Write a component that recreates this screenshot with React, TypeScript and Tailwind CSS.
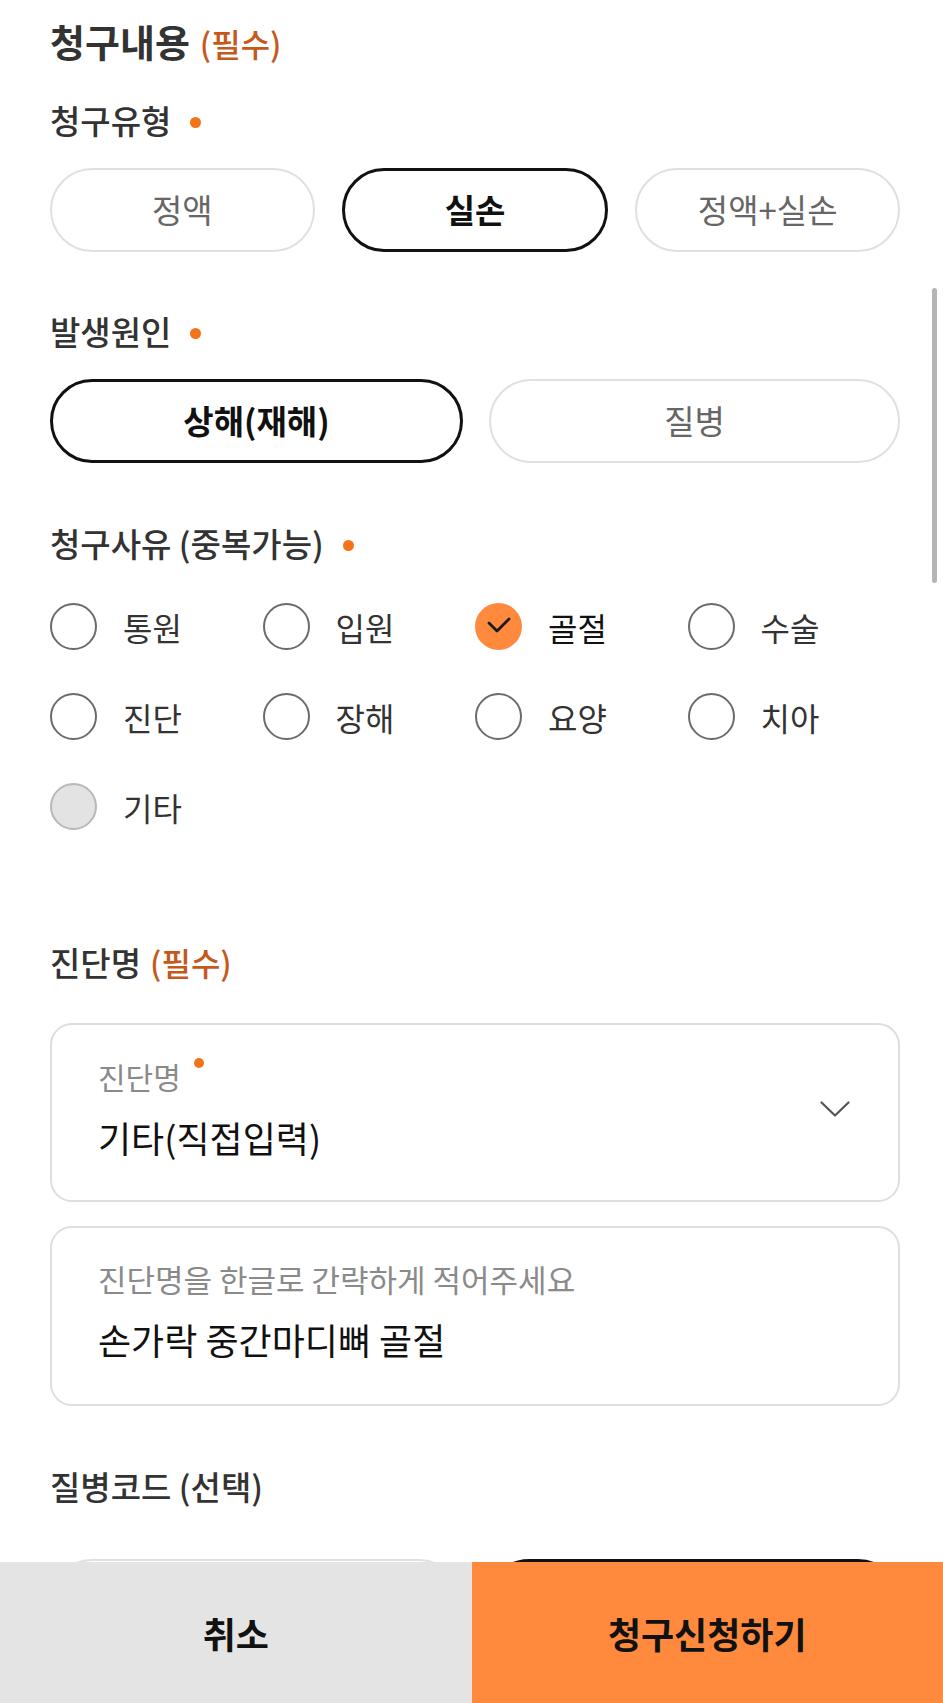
import { useState } from "react";

const reasons = ["통원", "입원", "골절", "수술", "진단", "장해", "요양", "치아", "기타"];

function SectionLabel({ text, dot }: { text: string; dot?: boolean }) {
  return (
    <div className="flex h-[36px] items-center text-[33px] font-medium leading-[36px] text-[#333]">
      <span>{text}</span>
      {dot && <span className="ml-[19px] mt-[4px] h-[11px] w-[11px] rounded-full bg-[#f37318]" />}
    </div>
  );
}

function Pill({ label, active, onClick }: { label?: string; active: boolean; onClick: () => void }) {
  return (
    <button
      onClick={onClick}
      className={`h-[84px] flex-1 rounded-full text-[33px] ${
        active ? "border-[3px] border-[#111] font-bold text-[#111]" : "border-2 border-[#e0e0e0] text-[#666]"
      }`}
    >
      {label}
    </button>
  );
}

export default function App() {
  const [claimType, setClaimType] = useState("실손");
  const [cause, setCause] = useState("상해(재해)");
  const [checked, setChecked] = useState<string[]>(["골절"]);
  const [code, setCode] = useState("right");

  const toggle = (r: string) => {
    if (r === "기타") return;
    setChecked((c) => (c.includes(r) ? c.filter((x) => x !== r) : [...c, r]));
  };

  return (
    <div className="relative min-h-[1900px] bg-white font-['Noto_Sans_CJK_KR','Noto_Sans',sans-serif]">
      <div className="pl-[50px] pr-[43px] pt-[21px]">
        {/* 청구내용 */}
        <div className="flex h-[40px] items-baseline leading-[40px]">
          <span className="text-[38px] font-semibold text-[#333]">청구내용</span>
          <span className="ml-[10px] text-[32px] font-medium text-[#c5591c]">(필수)</span>
        </div>

        <div className="mt-[41px]">
          <SectionLabel text="청구유형" dot />
        </div>
        <div className="mt-[30px] flex gap-[27px]">
          {["정액", "실손", "정액+실손"].map((t) => (
            <Pill key={t} label={t} active={claimType === t} onClick={() => setClaimType(t)} />
          ))}
        </div>

        <div className="mt-[61px]">
          <SectionLabel text="발생원인" dot />
        </div>
        <div className="mt-[30px] flex gap-[26px]">
          {["상해(재해)", "질병"].map((t) => (
            <Pill key={t} label={t} active={cause === t} onClick={() => setCause(t)} />
          ))}
        </div>

        <div className="mt-[62px]">
          <SectionLabel text="청구사유 (중복가능)" dot />
        </div>
        <div className="mt-[42px] grid grid-cols-4 gap-y-[43px]">
          {reasons.map((r) => {
            const on = checked.includes(r);
            const disabled = r === "기타";
            return (
              <button key={r} onClick={() => toggle(r)} className="flex h-[47px] items-center gap-[26px]">
                {on ? (
                  <span className="flex h-[47px] w-[47px] items-center justify-center rounded-full bg-[#ff8a3d]">
                    <svg width="47" height="47" viewBox="0 0 47 47" fill="none">
                      <path d="M14 20l8 8 12-12" stroke="#1a1a1a" strokeWidth="2.8" strokeLinecap="round" strokeLinejoin="round" />
                    </svg>
                  </span>
                ) : disabled ? (
                  <span className="h-[47px] w-[47px] rounded-full border-2 border-[#b8b8b8] bg-[#e3e3e3]" />
                ) : (
                  <span className="h-[47px] w-[47px] rounded-full border-2 border-[#6b6b6b]" />
                )}
                <span className={`text-[32px] leading-[40px] ${on ? "text-[#111]" : "text-[#333]"}`}>{r}</span>
              </button>
            );
          })}
        </div>

        {/* 진단명 */}
        <div className="mt-[114px] flex h-[36px] items-baseline leading-[36px]">
          <span className="text-[33px] font-medium text-[#333]">진단명</span>
          <span className="ml-[9px] text-[32px] font-medium text-[#c5591c]">(필수)</span>
        </div>

        <div className="mt-[43px] flex items-center rounded-[22px] border-2 border-[#dedede] pb-[43px] pl-[46px] pr-[48px] pt-[35px]">
          <div className="flex-1">
            <div className="flex h-[32px] items-start text-[30px] leading-[32px] text-[#8a8a8a]">
              <span>진단명</span>
              <span className="ml-[13px] mt-[-2px] h-[10px] w-[10px] rounded-full bg-[#f37318]" />
            </div>
            <div className="mt-[25px] h-[40px] text-[36px] leading-[40px] text-[#111]">기타(직접입력)</div>
          </div>
          <svg width="30" height="16" viewBox="0 0 30 16" fill="none">
            <path d="M1.5 1.5L15 14.5L28.5 1.5" stroke="#555" strokeWidth="2.2" strokeLinecap="round" strokeLinejoin="round" />
          </svg>
        </div>

        <div className="mt-[24px] rounded-[22px] border-2 border-[#dedede] pb-[45px] pl-[46px] pr-[48px] pt-[35px]">
          <div className="h-[32px] text-[31px] leading-[32px] text-[#8a8a8a]">진단명을 한글로 간략하게 적어주세요</div>
          <div className="mt-[24px] h-[40px] text-[36px] leading-[40px] text-[#111]">손가락 중간마디뼈 골절</div>
        </div>

        <div className="mt-[62px]">
          <SectionLabel text="질병코드 (선택)" />
        </div>
        {/* row hidden behind the action bar */}
        <div className="mt-[55px] flex gap-[26px]">
          <Pill active={code === "left"} onClick={() => setCode("left")} />
          <Pill active={code === "right"} onClick={() => setCode("right")} />
        </div>
      </div>

      {/* overlay scrollbar */}
      <div className="fixed right-[6px] top-[288px] h-[295px] w-[5px] rounded-full bg-[#b5b5b5]" />

      {/* bottom action bar */}
      <div className="fixed bottom-0 left-0 right-0 flex h-[141px]">
        <button className="flex w-1/2 items-center justify-center bg-[#e4e4e4] text-[36px] font-bold text-[#111]">취소</button>
        <button className="flex w-1/2 items-center justify-center bg-[#ff8a3d] text-[36px] font-bold text-[#111]">청구신청하기</button>
      </div>
    </div>
  );
}
